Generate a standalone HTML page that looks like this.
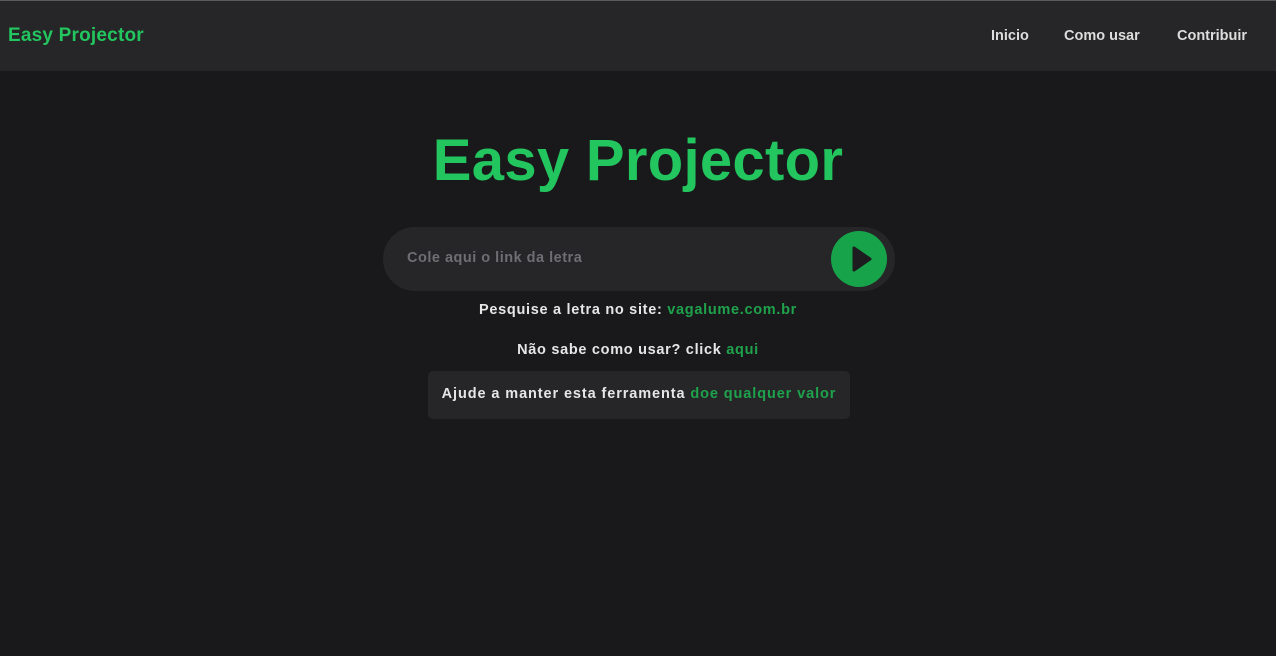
<!DOCTYPE html><html><head><style>
body{margin:0;background:#19191b;font-family:"Liberation Sans",sans-serif;font-weight:bold;color:#e6e6e6;width:1276px;height:656px;overflow:hidden;position:relative}
.nav{position:absolute;top:0;left:0;width:1276px;height:70px;background:#262628;border-top:1px solid #5a5a5a}
.brand{position:absolute;left:8px;top:24px;color:#22c55e;font-size:19px;letter-spacing:0.2px}
.links{position:absolute;top:27px;font-size:14.5px;color:#ddd}
h1{position:absolute;top:126px;left:0;width:1276px;text-align:center;margin:0;color:#22c55e;font-size:58px;letter-spacing:0.3px;line-height:70px}
.inp{position:absolute;left:383px;top:227px;width:512px;height:64px;border-radius:32px;background:#262628}
.ph{position:absolute;left:24px;top:23px;font-size:14.5px;color:#6e6e74;letter-spacing:0.5px}
.btn{position:absolute;left:448px;top:4px;width:56px;height:56px;border-radius:50%;background:#17a34a}
.t{position:absolute;left:0;width:1276px;text-align:center;font-size:14.5px;letter-spacing:0.7px}
.g{color:#1fa24c}
.box{position:absolute;left:428px;top:371px;width:422px;height:48px;border-radius:5px;background:#262628;text-align:center;line-height:46px;font-size:14.5px;letter-spacing:0.9px}
</style></head><body>
<div class="nav"><div class="brand">Easy Projector</div>
<div class="links" style="left:991px">Inicio</div><div class="links" style="left:1064px">Como usar</div><div class="links" style="left:1177px">Contribuir</div></div>
<h1>Easy Projector</h1>
<div class="inp"><div class="ph">Cole aqui o link da letra</div><div class="btn"><svg width="56" height="56"><path d="M23 17 L23 39 L39 28 Z" fill="#1d1d1f" stroke="#1d1d1f" stroke-width="3" stroke-linejoin="round"/></svg></div></div>
<div class="t" style="top:302px">Pesquise a letra no site: <span class="g">vagalume.com.br</span></div>
<div class="t" style="top:342px">Não sabe como usar? click <span class="g">aqui</span></div>
<div class="box">Ajude a manter esta ferramenta <span class="g">doe qualquer valor</span></div>
</body></html>
